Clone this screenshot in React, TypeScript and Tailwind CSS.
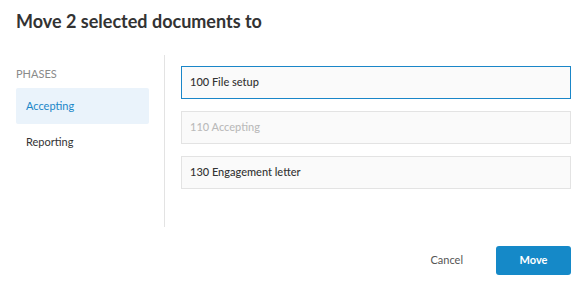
import React from "react";

export default function App() {
  const items = [
    { label: "100 File setup", state: "active" },
    { label: "110 Accepting", state: "disabled" },
    { label: "130 Engagement letter", state: "normal" },
  ];
  return (
    <div
      className="w-[585px] h-[290px] bg-white text-[#333] overflow-hidden"
      style={{ fontFamily: "Lato, 'Open Sans', sans-serif" }}
    >
      <div className="pl-4 pt-[10px] h-[55px]">
        <h1 className="text-[18px] leading-[22px] font-bold text-[#333]">Move 2 selected documents to</h1>
      </div>
      <div className="flex h-[172px]">
        <div className="w-[165px] pl-4 pr-[15px] border-r border-[#e3e3e3] pt-[12px]">
          <div className="text-[11px] leading-[13px] text-[#8a8a8a] uppercase mb-[8px]">Phases</div>
          <div className="h-[36px] rounded-[2px] bg-[#eaf3fb] text-[#1a86c8] text-[11px] flex items-center pl-[10px]">
            Accepting
          </div>
          <div className="h-[36px] text-[11px] text-[#333] flex items-center pl-[10px]">Reporting</div>
        </div>
        <div className="flex-1 pl-4 pr-[14px] pt-[11px] flex flex-col gap-[12px]">
          {items.map((it) => (
            <div
              key={it.label}
              className={
                "h-[33px] flex items-center pl-[8px] text-[11px] font-medium bg-[#fafafa] border " +
                (it.state === "active"
                  ? "border-[#1a86c8] text-[#333]"
                  : it.state === "disabled"
                  ? "border-[#e3e3e3] text-[#bbbbbb]"
                  : "border-[#e3e3e3] text-[#333]")
              }
            >
              {it.label}
            </div>
          ))}
        </div>
      </div>
      <div className="flex items-center justify-end pr-[14px] pt-[19px] gap-[33px]">
        <button className="text-[11px] text-[#555]">Cancel</button>
        <button className="w-[75px] h-[29px] rounded-[3px] bg-[#1589c8] text-white text-[11px] font-bold">
          Move
        </button>
      </div>
    </div>
  );
}
